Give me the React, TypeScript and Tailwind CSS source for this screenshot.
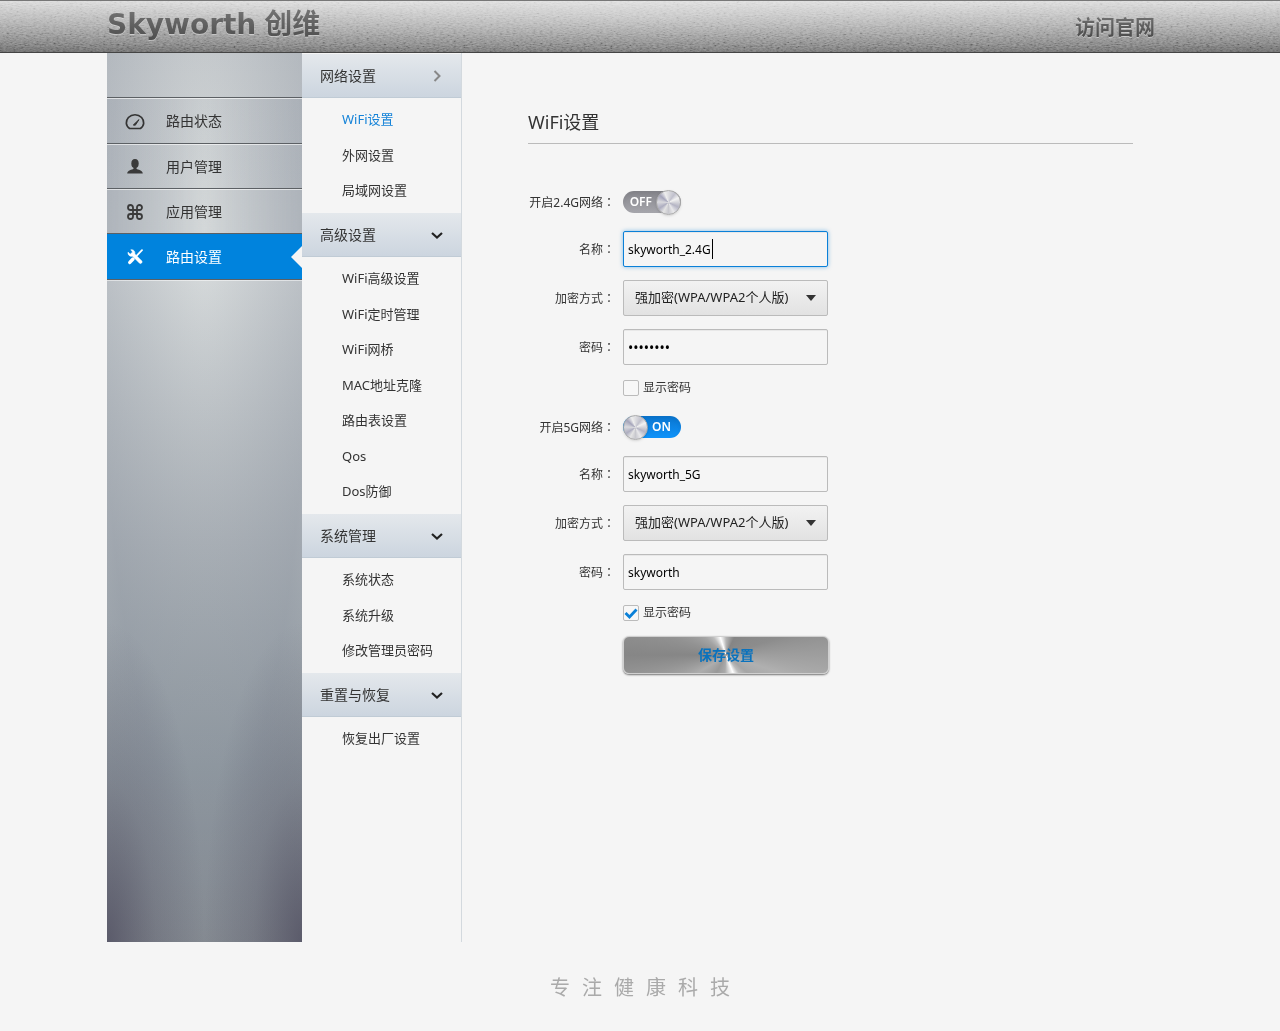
import { useState } from "react";

type MenuGroup = { title: string; items: string[]; open?: boolean };

const MENU: MenuGroup[] = [
    { title: "网络设置", items: ["WiFi设置", "外网设置", "局域网设置"], open: true },
    {
        title: "高级设置",
        items: ["WiFi高级设置", "WiFi定时管理", "WiFi网桥", "MAC地址克隆", "路由表设置", "Qos", "Dos防御"],
    },
    { title: "系统管理", items: ["系统状态", "系统升级", "修改管理员密码"] },
    { title: "重置与恢复", items: ["恢复出厂设置"] },
];

const GaugeIcon = () => (
    <svg width="20" height="18" viewBox="0 0 20 18" fill="none" stroke="#333" aria-hidden="true">
        <path d="M4.600 16.500C0.500 14 0.400 8.800 3.400 5.500C7 1.800 13 1.800 16.600 5.500C19.600 8.800 19.500 14 15.400 16.500Z" strokeWidth="1.700" strokeLinejoin="round" />
        <path d="M8.300 13L14 7.600L10.300 13.200Z" fill="#333" strokeWidth="1" strokeLinejoin="round" />
    </svg>
);

const UserIcon = () => (
    <svg width="20" height="18" viewBox="0 0 20 18" fill="#3a3a3a" aria-hidden="true">
        <ellipse cx="10" cy="5.500" rx="3.700" ry="4.500" />
        <path d="M8.500 9h3v1.800C13 12 17.500 12 17.800 15.500H2.200C2.500 12 7 12 8.500 10.800Z" />
    </svg>
);

const CommandIcon = () => (
    <svg width="20" height="18" viewBox="0 0 20 18" fill="none" stroke="#3a3a3a" strokeWidth="1.800" aria-hidden="true">
        <path d="M8 7V4.500A2.500 2.500 0 1 0 5.500 7H14.500A2.500 2.500 0 1 0 12 4.500V13.500A2.500 2.500 0 1 0 14.500 11H5.500A2.500 2.500 0 1 0 8 13.500Z" />
    </svg>
);

const ToolsIcon = () => (
    <svg width="20" height="18" viewBox="0 0 20 18" fill="#fff" stroke="#fff" aria-hidden="true">
        <path
            d="M5.800 1.800C8 1.200 10.400 3 9.800 6L16.800 13C17.800 14.200 16 16.400 14.600 15.200L7.600 8.200C5 8.800 2.600 7 3 4.200L5.200 6.200L7.600 4Z"
            strokeWidth="0.600"
            strokeLinejoin="round"
        />
        <path d="M17 2.200L12 7.400" strokeWidth="1.800" strokeLinecap="round" />
        <path d="M8 11L4.800 14.400" strokeWidth="3.400" strokeLinecap="round" />
    </svg>
);

const NAV = [
    { label: "路由状态", icon: <GaugeIcon /> },
    { label: "用户管理", icon: <UserIcon /> },
    { label: "应用管理", icon: <CommandIcon /> },
    { label: "路由设置", icon: <ToolsIcon />, active: true },
];

const Header = () => (
    <header className="relative border-t border-b border-t-[#777] border-b-[#444] bg-[radial-gradient(ellipse_60%_100%_at_50%_30%,#ffffff33,transparent),linear-gradient(to_bottom,#d8d8d8,#a4a4a4_50%,#6a6a6a)]">
        {/* brushed metal grain */}
        <svg className="absolute inset-0 h-full w-full opacity-25 mix-blend-overlay" aria-hidden="true">
            <filter id="grain">
                <feTurbulence type="fractalNoise" baseFrequency="0.3 0.9" numOctaves="2" seed="4" />
                <feColorMatrix values="1.6 0 0 0 -0.3 1.6 0 0 0 -0.3 1.6 0 0 0 -0.3 0 0 0 0 1" />
            </filter>
            <rect width="100%" height="100%" filter="url(#grain)" />
        </svg>
        <div className="relative mx-auto flex h-[51px] max-w-[1066px] items-center justify-between pr-[18px]">
            <a
                href="#"
                className="flex items-center gap-2 bg-linear-to-b from-[#777] to-[#454545] bg-clip-text pb-1 font-['DejaVu_Sans','Noto_Sans_CJK_SC',sans-serif] text-[28px] leading-9 font-bold text-transparent drop-shadow-[0_1px_0_#ffffff66]"
            >
                <span>Skyworth</span>
                <span>创维</span>
            </a>
            <a
                href="#"
                className="bg-linear-to-b from-[#777] to-[#444] bg-clip-text pt-0.5 text-xl leading-7 font-bold text-transparent drop-shadow-[0_1px_0_#ffffff66]"
            >
                访问官网
            </a>
        </div>
    </header>
);

const Sidebar = () => (
    <nav className="w-[195px] shrink-0 bg-[radial-gradient(ellipse_50%_36%_at_0%_100%,#48465ab0,#48465a40_50%,transparent),radial-gradient(ellipse_50%_36%_at_100%_100%,#48465ab0,#48465a40_50%,transparent),radial-gradient(ellipse_60%_75%_at_50%_20%,transparent,#80889655_90%,transparent_130%),linear-gradient(to_bottom,#ccd0d2_0%,#d6dadb_25%,#b0b6bb_55%,#949da3_80%,#858a90_100%)] pt-11">
        <ul className="border-b border-white/50">
            {NAV.map((item) => (
                <li key={item.label} className="group border-t border-[#5c6064]">
                    <a
                        href="#"
                        className={
                            item.active
                                ? "relative flex h-[46px] items-center border-b border-[#5c6064] bg-[#0083dd] pl-[18px] text-sm text-white"
                                : "flex h-11 items-center border-t border-white/60 bg-[linear-gradient(to_right,#80889633,transparent_50%,#80889633)] pl-[18px] text-sm text-[#333] group-first:h-[45px]"
                        }
                    >
                        {item.icon}
                        <span className="ml-[21px]">{item.label}</span>
                        {item.active && (
                            <span className="absolute right-0 border-y-[11px] border-r-[11px] border-y-transparent border-r-[#f5f5f5]" />
                        )}
                    </a>
                </li>
            ))}
        </ul>
    </nav>
);

const SubMenu = () => (
    <nav className="w-40 shrink-0 border-r border-[#d3d9de] pt-px">
        {MENU.map((group) => (
            <section key={group.title}>
                <button
                    type="button"
                    className="flex h-11 w-full items-center justify-between border-b border-[#c0cbd5] bg-linear-to-b from-[#e4e8ec] to-[#ccd5df] pr-[17px] pl-[18px] text-sm text-[#333]"
                >
                    {group.title}
                    <svg width="14" height="14" viewBox="0 0 14 14" fill="none" aria-hidden="true">
                        {group.open ? (
                            <path d="M4.500 2L9.500 7L4.500 12" stroke="#888" strokeWidth="2" />
                        ) : (
                            <path d="M2 5L7 9.500L12 5" stroke="#222" strokeWidth="2.200" />
                        )}
                    </svg>
                </button>
                <ul className="pt-1 pb-1">
                    {group.items.map((item) => (
                        <li key={item} className="odd:h-9 even:h-[35px]">
                            <a
                                href="#"
                                className={
                                    item === "WiFi设置"
                                        ? "flex h-full items-center pl-10 text-[13px] text-[#1583d8]"
                                        : "flex h-full items-center pl-10 text-[13px] text-[#333]"
                                }
                            >
                                {item}
                            </a>
                        </li>
                    ))}
                </ul>
            </section>
        ))}
    </nav>
);

const Knob = () => (
    <span className="h-[25px] w-[25px] shrink-0 rounded-full border border-[#aaa] bg-[conic-gradient(#dcdce0,#c0c0cc_10%,#f2f2f2_18%,#cfcfd6_26%,#b4b4c4_32%,#e8e8ea_42%,#c8c8ce_50%,#e4e4e4_58%,#adadc0_66%,#dadade_76%,#a4a4ba_86%,#eee_94%,#dcdce0)] shadow-sm" />
);

const Toggle = ({ id, on, onChange }: { id: string; on: boolean; onChange: (v: boolean) => void }) => (
    <button
        id={id}
        type="button"
        role="switch"
        aria-checked={on}
        onClick={() => onChange(!on)}
        className={
            on
                ? "flex h-[22px] w-[58px] items-center rounded-full bg-linear-to-b from-[#0a75cf] to-[#0f93fa] text-xs font-semibold text-white inset-shadow-sm"
                : "flex h-[22px] w-[58px] items-center justify-end rounded-full bg-linear-to-b from-[#85858b] to-[#a6a6ac] text-xs font-semibold text-white inset-shadow-sm"
        }
    >
        {on && <Knob />}
        <span className="px-1">{on ? "ON" : "OFF"}</span>
        {!on && <Knob />}
    </button>
);

const FieldLabel = ({ htmlFor, text }: { htmlFor: string; text: string }) => (
    <label htmlFor={htmlFor} className="w-[95px] shrink-0 pr-2 text-right whitespace-nowrap">
        {text}
        <span className="font-['Noto_Sans_CJK_TC',sans-serif]">：</span>
    </label>
);

const inputClass =
    "h-9 w-[205px] rounded-xs border border-[#bbb] bg-[#f5f5f5] px-1 text-black inset-shadow-2xs outline-none focus:border-[#0a80d8] focus:shadow-[0_0_4px_#0a80d880]";

type NetworkProps = {
    id: string;
    title: string;
    name: string;
    password: string;
    enabled: boolean;
    visible: boolean;
    focused?: boolean;
};

const NetworkForm = ({ id, title, name, password, enabled, visible, focused }: NetworkProps) => {
    const [on, setOn] = useState(enabled);
    const [ssid, setSsid] = useState(name);
    const [pwd, setPwd] = useState(password);
    const [show, setShow] = useState(visible);

    return (
        <div>
            <div className="flex h-6 items-center">
                <FieldLabel htmlFor={id + "-on"} text={title} />
                <Toggle id={id + "-on"} on={on} onChange={setOn} />
            </div>
            <div className="mt-[17px] flex items-center">
                <FieldLabel htmlFor={id + "-name"} text="名称" />
                <div className="relative">
                    <input
                        id={id + "-name"}
                        className={inputClass}
                        value={ssid}
                        autoFocus={focused}
                        onChange={(e) => setSsid(e.target.value)}
                    />
                    {/* resting caret, gone once the name is edited */}
                    {focused && ssid === name && (
                        <span className="pointer-events-none absolute top-2 left-[89px] h-5 w-px bg-black" />
                    )}
                </div>
            </div>
            <div className="mt-[13px] flex items-center">
                <FieldLabel htmlFor={id + "-enc"} text="加密方式" />
                <div className="relative">
                    <select
                        id={id + "-enc"}
                        className="h-9 w-[205px] appearance-none rounded-xs border border-[#bbb] bg-linear-to-b from-[#f2f2f2] to-[#e2e2e2] pl-[11px] text-[13px] text-[#222]"
                    >
                        <option>强加密(WPA/WPA2个人版)</option>
                    </select>
                    <span className="pointer-events-none absolute top-[15px] right-3 border-x-[5px] border-t-[6px] border-x-transparent border-t-[#333]" />
                </div>
            </div>
            <div className="mt-[13px] flex items-center">
                <FieldLabel htmlFor={id + "-pwd"} text="密码" />
                <input
                    id={id + "-pwd"}
                    type={show ? "text" : "password"}
                    className={show ? inputClass : inputClass + " text-sm"}
                    value={pwd}
                    onChange={(e) => setPwd(e.target.value)}
                />
            </div>
            <label className="mt-[13px] ml-[95px] flex h-5 items-center gap-1">
                <input
                    type="checkbox"
                    checked={show}
                    onChange={(e) => setShow(e.target.checked)}
                    className="peer h-4 w-4 appearance-none rounded-xs border border-[#bbb] bg-[#f7f7f7]"
                />
                <svg
                    className="pointer-events-none invisible -ml-5 peer-checked:visible"
                    width="16"
                    height="16"
                    viewBox="0 0 16 16"
                    fill="none"
                    aria-hidden="true"
                >
                    <path d="M2.500 8L6.500 12L13.500 4.500" stroke="#0a80d8" strokeWidth="2.800" />
                </svg>
                显示密码
            </label>
        </div>
    );
};

const App = () => (
    <div className="min-h-screen bg-[#f5f5f5] font-['Noto_Sans','Noto_Sans_CJK_SC',sans-serif] text-[#333]">
        <Header />
        <div className="mx-auto flex min-h-[889px] max-w-[1066px]">
            <Sidebar />
            <SubMenu />
            <main className="flex-1 pt-14 pr-10 pl-[66px]">
                <h1 className="border-b border-[#bbb] pb-2 text-lg leading-[26px]">WiFi设置</h1>
                <form className="mt-[46px] flex flex-col gap-[17px] text-xs" onSubmit={(e) => e.preventDefault()}>
                    <NetworkForm
                        id="g24"
                        title="开启2.4G网络"
                        name="skyworth_2.4G"
                        password="skyworth"
                        enabled={false}
                        visible={false}
                        focused
                    />
                    <NetworkForm id="g5" title="开启5G网络" name="skyworth_5G" password="skyworth" enabled visible />
                    <button
                        type="submit"
                        className="-mt-1 ml-[95px] h-[38px] w-[206px] rounded-md border border-[#d0d0d0] bg-[conic-gradient(from_0deg_at_50%_50%,#b5b5b5_0%,#858585_7%,#8c8c8c_20%,#b0b0b0_30%,#a6a6a6_36%,#bbb_40%,#fff_44%,#aaa_51%,#999_58%,#adadad_66%,#868686_75%,#929292_80%,#a4a4a4_86%,#bbb_90%,#fff_95%,#b5b5b5_100%)] text-sm font-bold text-[#0a72bd] shadow-[0_1px_2px_#00000088]"
                    >
                        保存设置
                    </button>
                </form>
            </main>
        </div>
        <footer className="flex justify-center gap-3 pt-[31px] pb-7 text-xl leading-[30px] text-[#aaa]">
            {"专注健康科技".split("").map((c) => (
                <span key={c}>{c}</span>
            ))}
        </footer>
    </div>
);

export default App;
